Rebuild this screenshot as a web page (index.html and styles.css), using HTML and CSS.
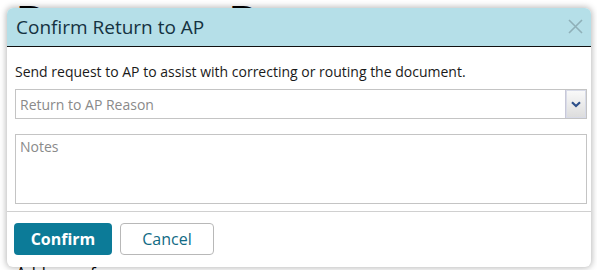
FILE: index.html
```
<!DOCTYPE html>
<html>
<head>
<meta charset="utf-8">
<link rel="stylesheet" href="styles.css">
</head>
<body>
<div class="page">
  <h1 class="page-title">Document Data</h1>
  <div class="page-line">Address of</div>
</div>
<div class="dialog">
  <div class="dialog-header">
    <span class="dialog-title">Confirm Return to AP</span>
    <span class="close">
      <svg width="15" height="15" viewBox="0 0 15 15"><path d="M1 1L14 14M14 1L1 14" stroke="#8fb0b8" stroke-width="1.6" fill="none"/></svg>
    </span>
  </div>
  <div class="dialog-body">
    <p class="intro">Send request to AP to assist with correcting or routing the document.</p>
    <div class="select">
      <span class="placeholder">Return to AP Reason</span>
      <span class="select-btn">
        <svg width="10" height="7" viewBox="0 0 10 7"><path d="M1 1.2L5 5L9 1.2" stroke="#2d4f8a" stroke-width="2.2" fill="none"/></svg>
      </span>
    </div>
    <div class="notes"><span class="placeholder">Notes</span></div>
  </div>
  <div class="dialog-footer">
    <button class="btn btn-primary">Confirm</button>
    <button class="btn btn-secondary">Cancel</button>
  </div>
</div>
</body>
</html>
```
FILE: styles.css
```
html, body { margin: 0; padding: 0; background: #fff; }
body { width: 597px; height: 270px; overflow: hidden; position: relative; font-family: "Open Sans", sans-serif; }
.page { padding: 0 0 0 16px; height: 270px; overflow: hidden; }
.page-title { margin: -3px 0 0 0; font-size: 44px; font-weight: 400; color: #000; line-height: 50px; font-family: "Liberation Sans", sans-serif; }
.page-line { margin-top: 216px; font-size: 16px; line-height: 20px; color: #000; }
.dialog {
  position: absolute; left: 7px; top: 8px; width: 584px; height: 259px;
  background: #fff; border-radius: 6px; overflow: hidden;
  box-shadow: 0 0 6px 1px rgba(0,0,0,0.28);
  display: flex; flex-direction: column;
}
.dialog-header {
  height: 38px; flex-shrink: 0; background: #b5dfe8; border-bottom: 1px solid #111;
  display: flex; align-items: center; justify-content: space-between;
  padding: 0 8px 0 9px;
}
.dialog-title { font-size: 19px; color: #143241; line-height: 24px; }
.close { display: flex; align-items: center; margin-top: -2px; }
.dialog-body { padding: 0 4px 0 8px; border-bottom: 1px solid #d0d0d0; height: 165px; flex-shrink: 0; box-sizing: border-box; }
.intro { margin: 0; padding-top: 15px; font-size: 14px; line-height: 19px; color: #1a1a1a; }
.select {
  margin-top: 8px; height: 30px; box-sizing: border-box; border: 1px solid #c4c4c4;
  display: flex; align-items: center; justify-content: space-between;
}
.placeholder { font-size: 14px; color: #8a8a8a; padding-left: 4px; }
.select-btn {
  width: 20px; height: 28px; border-left: 1px solid #c8c8d8;
  background: linear-gradient(#fafafa, #dcdcdc);
  display: flex; align-items: center; justify-content: center;
  box-shadow: inset 0 0 0 1px #d8dbe8;
}
.notes { margin-top: 15px; height: 70px; box-sizing: border-box; border: 1px solid #c4c4c4; padding-top: 2px; }
.notes .placeholder { display: block; line-height: 20px; }
.dialog-footer { display: flex; gap: 8px; padding: 11px 0 0 7px; }
.btn { font-family: "Open Sans", sans-serif; font-size: 16px; height: 32px; border-radius: 4px; cursor: pointer; }
.btn-primary { background: #0c7b98; color: #fff; font-weight: 700; border: none; width: 98px; }
.btn-secondary { background: #fff; color: #116a84; border: 1px solid #b8b8b8; width: 94px; }
```
